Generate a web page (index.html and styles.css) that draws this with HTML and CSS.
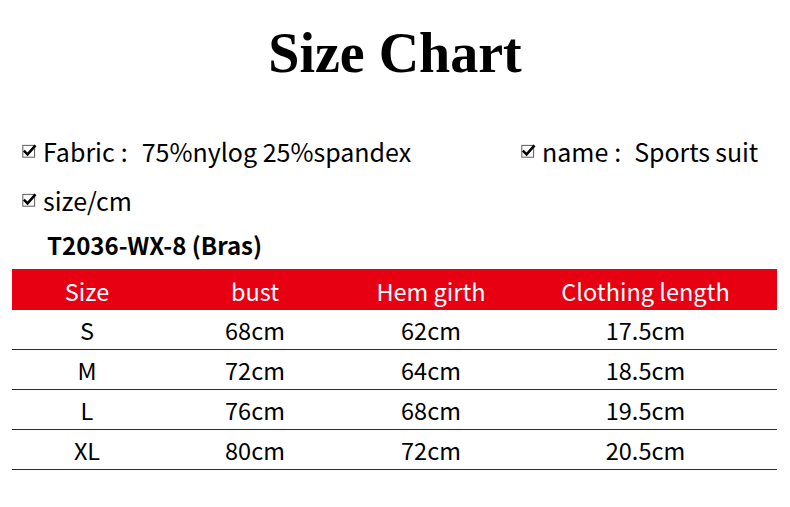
FILE: index.html
```html
<!DOCTYPE html>
<html>
<head>
<meta charset="utf-8">
<link rel="stylesheet" href="styles.css">
</head>
<body>
<div class="page">
  <h1 class="title">Size Chart</h1>
  <div class="info">
    <div class="info-row">
      <div class="item item-fabric">
        <svg class="check" viewBox="0 0 14 14" width="15" height="15"><rect x="0.75" y="2.25" width="11" height="11" fill="none" stroke="#666" stroke-width="1"/><path d="M2.6 8.0 L5.2 10.6 L11.8 3.2" fill="none" stroke="#000" stroke-width="2.4" stroke-linecap="square"/></svg>
        <span class="label">Fabric</span><span class="colon">:</span>
        <span class="value">75%nylog 25%spandex</span>
      </div>
      <div class="item item-name">
        <svg class="check" viewBox="0 0 14 14" width="15" height="15"><rect x="0.75" y="2.25" width="11" height="11" fill="none" stroke="#666" stroke-width="1"/><path d="M2.6 8.0 L5.2 10.6 L11.8 3.2" fill="none" stroke="#000" stroke-width="2.4" stroke-linecap="square"/></svg>
        <span class="label">name</span><span class="colon">:</span>
        <span class="value value-name">Sports suit</span>
      </div>
    </div>
    <div class="info-row info-row-2">
      <div class="item">
        <svg class="check" viewBox="0 0 14 14" width="15" height="15"><rect x="0.75" y="2.25" width="11" height="11" fill="none" stroke="#666" stroke-width="1"/><path d="M2.6 8.0 L5.2 10.6 L11.8 3.2" fill="none" stroke="#000" stroke-width="2.4" stroke-linecap="square"/></svg>
        <span class="label">size/cm</span>
      </div>
    </div>
  </div>
  <div class="model">T2036-WX-8 (Bras)</div>
  <div class="table">
    <div class="trow thead">
      <div>Size</div><div>bust</div><div>Hem girth</div><div>Clothing length</div>
    </div>
    <div class="trow">
      <div>S</div><div>68cm</div><div>62cm</div><div>17.5cm</div>
    </div>
    <div class="trow">
      <div>M</div><div>72cm</div><div>64cm</div><div>18.5cm</div>
    </div>
    <div class="trow">
      <div>L</div><div>76cm</div><div>68cm</div><div>19.5cm</div>
    </div>
    <div class="trow">
      <div>XL</div><div>80cm</div><div>72cm</div><div>20.5cm</div>
    </div>
  </div>
</div>
</body>
</html>
```
FILE: styles.css
```css
html, body {
  margin: 0;
  padding: 0;
  background: #fff;
}
.page {
  width: 790px;
  height: 507px;
  font-family: "Noto Sans CJK SC", "Noto Sans", sans-serif;
  color: #000;
  overflow: hidden;
}
.title {
  margin: 0;
  padding-top: 15px;
  height: 81px;
  text-align: center;
  font-family: "Liberation Serif", "DejaVu Serif", serif;
  font-weight: bold;
  font-size: 56px;
  line-height: 76px;
  color: #000;
}
.info {
  padding-top: 35px;
  padding-left: 22px;
}
.info-row {
  display: flex;
  height: 40px;
  align-items: center;
}
.info-row-2 {
  margin-top: 9px;
}
.item {
  display: flex;
  align-items: center;
  font-size: 25px;
}
.item-fabric {
  width: 499px;
}
.check {
  flex: none;
  margin-right: 6px;
  margin-top: -1px;
}
.colon {
  margin-left: 6px;
}
.value {
  margin-left: 14px;
}
.value-name {
  margin-left: 13px;
  letter-spacing: -0.1px;
}
.model {
  padding-left: 47px;
  margin-top: 6px;
  height: 38px;
  line-height: 38px;
  font-size: 24px;
  font-weight: bold;
  color: #000;
}
.table {
  margin-top: 5px;
  margin-left: 12px;
  width: 765px;
}
.trow {
  display: grid;
  grid-template-columns: 150px 186px 166px 263px;
  height: 39px;
  align-items: center;
  text-align: center;
  font-size: 23.5px;
  border-bottom: 1.5px solid #2a2a2a;
}
.thead {
  height: 41px;
  padding-top: 2px;
  box-sizing: border-box;
  background: #e60012;
  color: #fff;
  border-bottom: none;
}
```
